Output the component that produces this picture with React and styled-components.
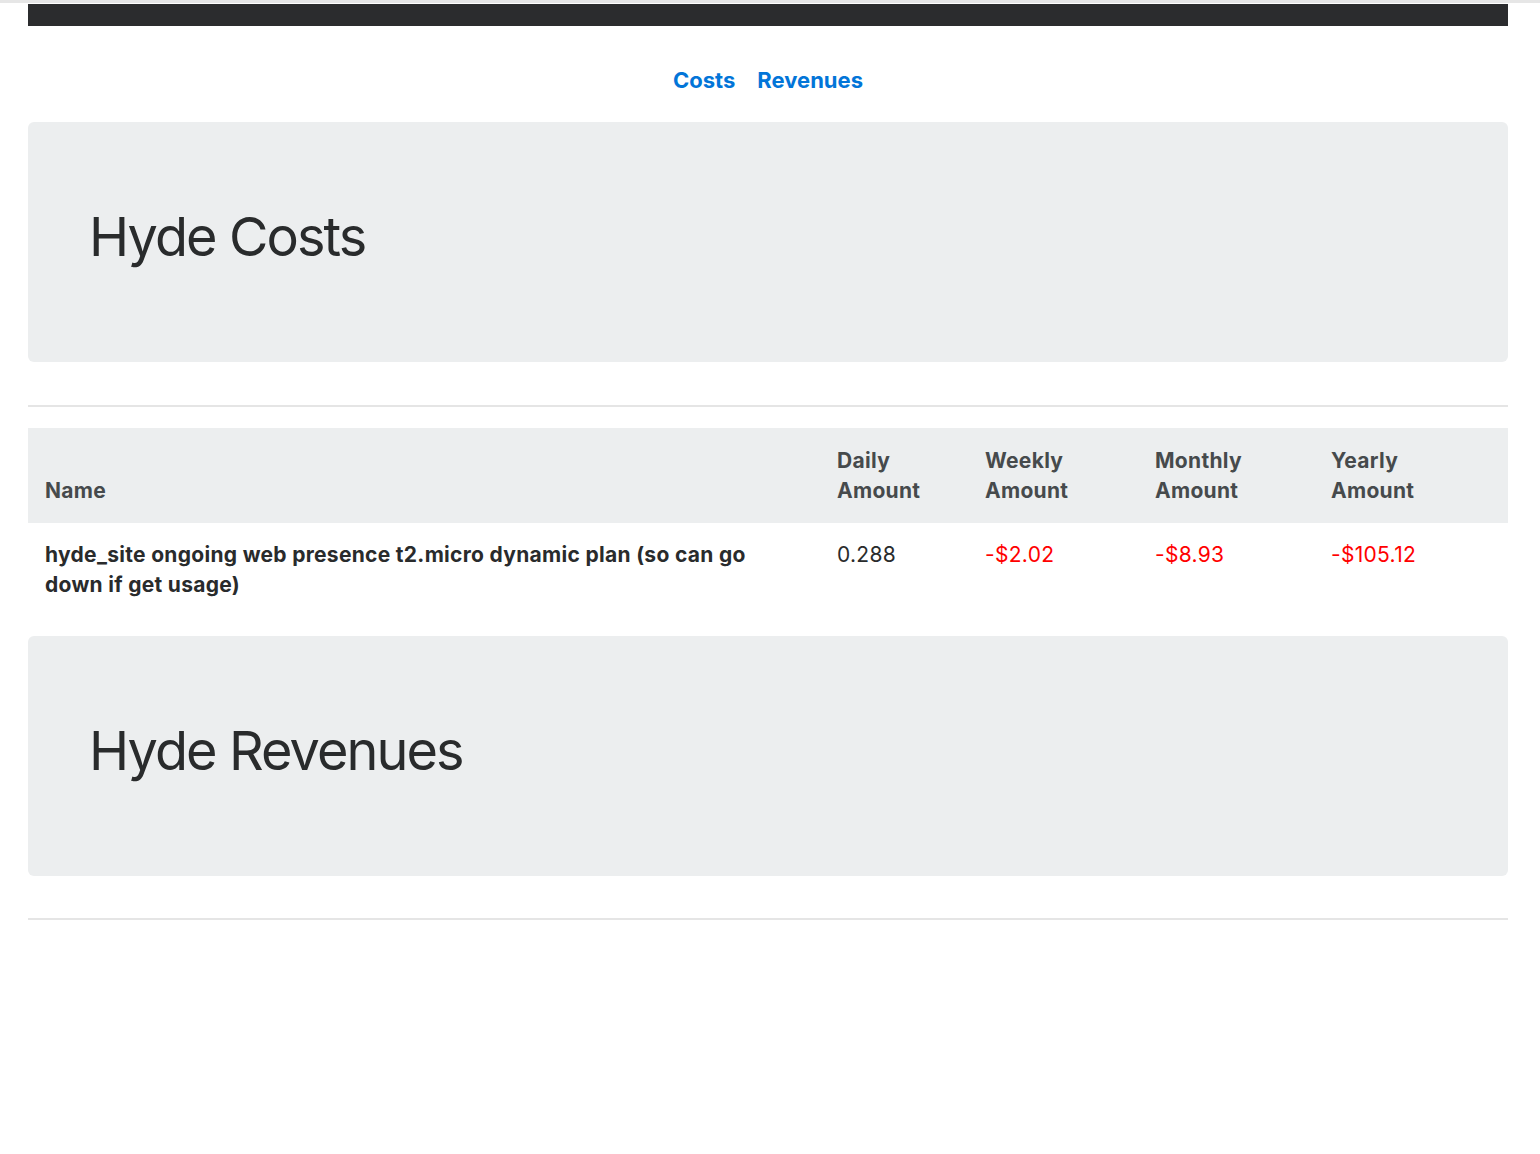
import React from 'react'
import styled, { createGlobalStyle } from 'styled-components'

const GlobalStyle = createGlobalStyle`
  html, body {
    margin: 0;
    padding: 0;
    background: #ffffff;
  }
  body {
    font-family: Inter, "Noto Sans", "Liberation Sans", sans-serif;
    font-size: 21px;
    line-height: 30px;
    letter-spacing: 0.3px;
    color: #292b2c;
    border-top: 3px solid #e6e6e6;
  }
`

const Page = styled.div`
  padding: 1px 32px 0 28px;
`

const TopBar = styled.div`
  height: 22px;
  background: #2b2c2e;
`

const Nav = styled.nav`
  display: flex;
  justify-content: center;
  gap: 22px;
  margin: 39px 0 27px;
`

const NavLink = styled.a`
  font-size: 22px;
  font-weight: 700;
  line-height: 30px;
  letter-spacing: 0;
  color: #0275d8;
  text-decoration: none;
`

const Jumbotron = styled.section`
  background: #eceeef;
  border-radius: 6px;
  height: 240px;
  box-sizing: border-box;
  padding: 85px 61px 0;
`

const Title = styled.h1`
  margin: 0;
  font-size: 54px;
  font-weight: 400;
  line-height: 1.1;
  letter-spacing: -1.9px;
  color: #292b2c;
`

const Rule = styled.hr`
  border: 0;
  border-top: 2px solid #e5e5e5;
  margin: ${p => p.$top}px 0 ${p => p.$bottom}px;
`

const Table = styled.table`
  width: 100%;
  border-collapse: collapse;
  table-layout: fixed;
  margin-bottom: 17px;
`

const HeadCell = styled.th`
  background: #eceeef;
  color: #464a4c;
  font-weight: 700;
  text-align: left;
  vertical-align: bottom;
  padding: 18px 24px 17px 17px;
`

const NameCell = styled.th`
  font-weight: 700;
  text-align: left;
  vertical-align: top;
  padding: 17px 17px 19px;
`

const Cell = styled.td`
  vertical-align: top;
  padding: 17px 17px 19px;
  color: ${p => (p.$negative ? '#ff0000' : '#292b2c')};
`

const rows = [
  {
    name: 'hyde_site ongoing web presence t2.micro dynamic plan (so can go down if get usage)',
    daily: '0.288',
    weekly: '-$2.02',
    monthly: '-$8.93',
    yearly: '-$105.12'
  }
]

const App = () => {
  return (
    <>
      <GlobalStyle />
      <Page>
        <TopBar />
        <Nav>
          <NavLink href='#costs'>Costs</NavLink>
          <NavLink href='#revenues'>Revenues</NavLink>
        </Nav>

        <Jumbotron id='costs'>
          <Title>Hyde Costs</Title>
        </Jumbotron>
        <Rule $top={43} $bottom={21} />

        <Table>
          <colgroup>
            <col style={{ width: 792 }} />
            <col style={{ width: 148 }} />
            <col style={{ width: 170 }} />
            <col style={{ width: 176 }} />
            <col />
          </colgroup>
          <thead>
            <tr>
              <HeadCell>Name</HeadCell>
              <HeadCell>Daily Amount</HeadCell>
              <HeadCell>Weekly Amount</HeadCell>
              <HeadCell>Monthly Amount</HeadCell>
              <HeadCell>Yearly Amount</HeadCell>
            </tr>
          </thead>
          <tbody>
            {rows.map(r => (
              <tr key={r.name}>
                <NameCell>{r.name}</NameCell>
                <Cell>{r.daily}</Cell>
                <Cell $negative>{r.weekly}</Cell>
                <Cell $negative>{r.monthly}</Cell>
                <Cell $negative>{r.yearly}</Cell>
              </tr>
            ))}
          </tbody>
        </Table>

        <Jumbotron id='revenues'>
          <Title>Hyde Revenues</Title>
        </Jumbotron>
        <Rule $top={42} $bottom={0} />
      </Page>
    </>
  )
}

export default App
